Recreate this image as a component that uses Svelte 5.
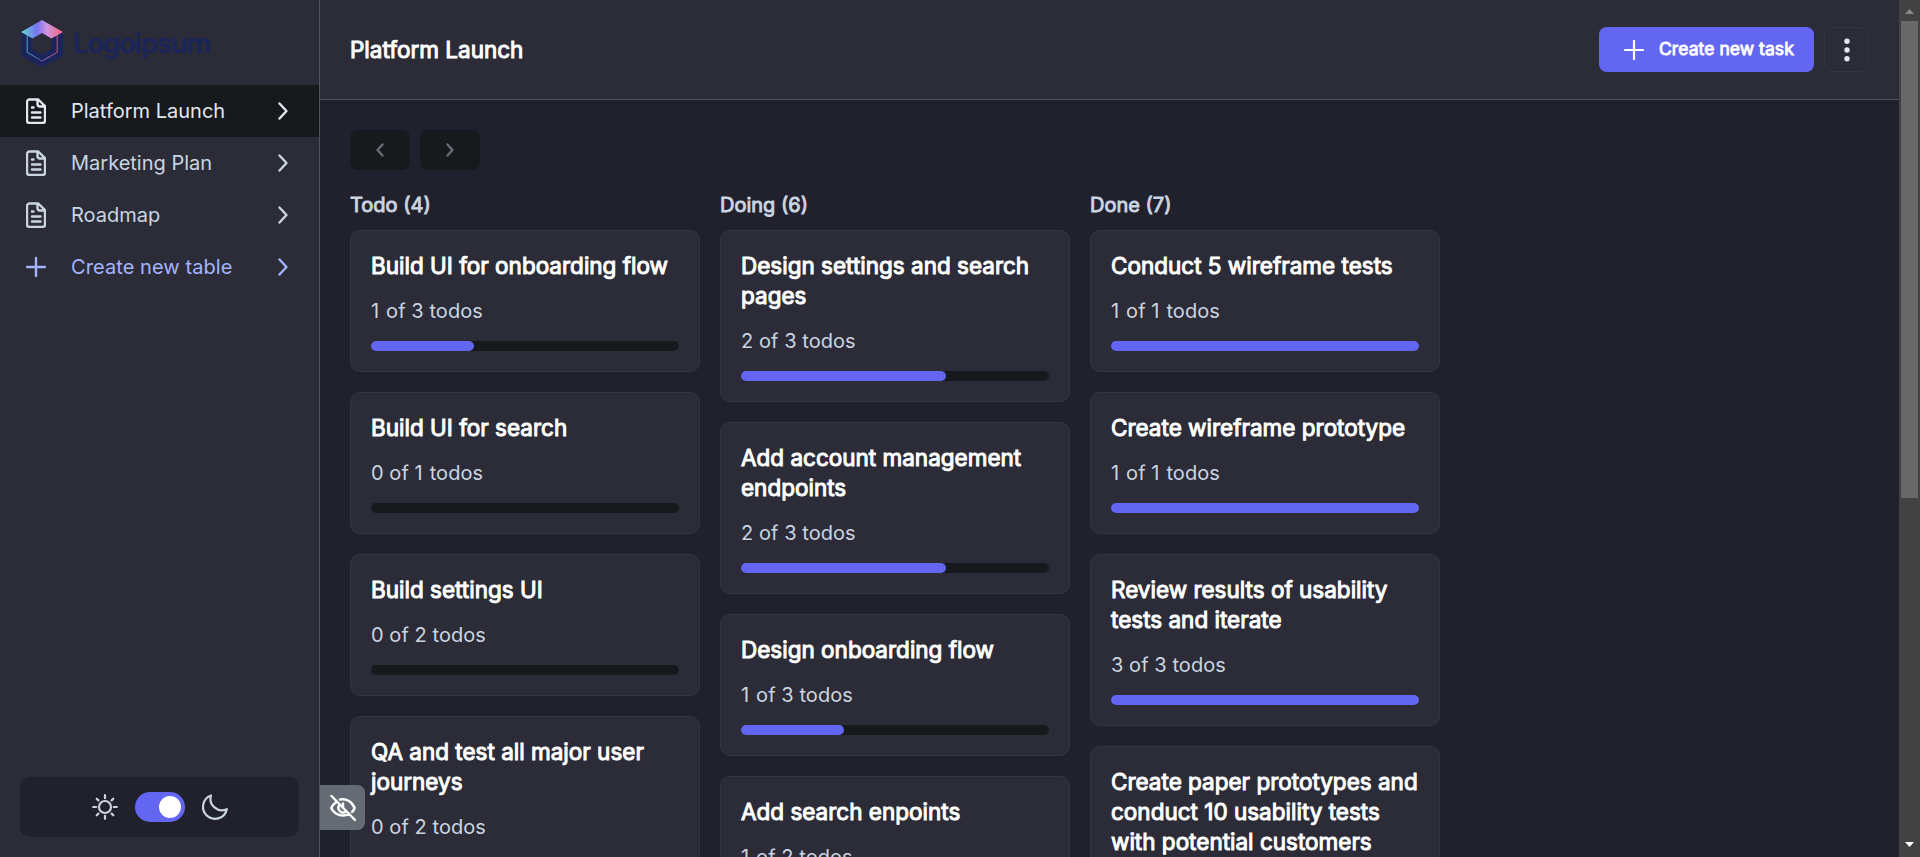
<script>
  const boards = [
    { name: 'Platform Launch', active: true },
    { name: 'Marketing Plan' },
    { name: 'Roadmap' },
  ];
  const columns = [
    { name: 'Todo', count: 4, tasks: [
      ['Build UI for onboarding flow', 1, 3],
      ['Build UI for search', 0, 1],
      ['Build settings UI', 0, 2],
      ['QA and test all major user journeys', 0, 2],
    ] },
    { name: 'Doing', count: 6, tasks: [
      ['Design settings and search pages', 2, 3],
      ['Add account management endpoints', 2, 3],
      ['Design onboarding flow', 1, 3],
      ['Add search enpoints', 1, 2],
    ] },
    { name: 'Done', count: 7, tasks: [
      ['Conduct 5 wireframe tests', 1, 1],
      ['Create wireframe prototype', 1, 1],
      ['Review results of usability tests and iterate', 3, 3],
      ['Create paper prototypes and conduct 10 usability tests with potential customers', 2, 2],
    ] },
  ];
</script>

{#snippet chevron()}
  <svg class="chevron" width="30" height="30" viewBox="0 0 30 30"><path d="M11.5 7.5 18.500 15l-7 7.500" /></svg>
{/snippet}

<div class="app">
  <aside>
    <div class="logo">
      <svg width="42" height="48" viewBox="0 0 42 48">
        <defs>
          <linearGradient id="roof" x1="0" x2="1" y1="0" y2="0">
            <stop offset="0" stop-color="#62dbd0" /><stop offset=".38" stop-color="#7774f0" /><stop offset=".62" stop-color="#cf94e0" /><stop offset="1" stop-color="#f8627c" />
          </linearGradient>
          <linearGradient id="edge" x1="0" x2="1" y1="0" y2="0">
            <stop offset="0" stop-color="#5cc5cf" /><stop offset=".4" stop-color="#6c6ce0" /><stop offset=".65" stop-color="#b77ccc" /><stop offset="1" stop-color="#e85f80" />
          </linearGradient>
        </defs>
        <path fill="#1b2559" fill-rule="evenodd" d="M0 12 21 0l21 12v24L21 47.500 0 36ZM21 13l9.500 5v11.500L21 34.500l-9.500-5V18Z" />
        <path fill="none" stroke="url(#edge)" stroke-width=".8" d="M6.200 15v17.300L21 41l15.200-8.700V15" />
        <path fill="url(#roof)" d="M0 12 21 0l21 12-11.500 6.400L21 13l-9.500 5.400Z" />
      </svg>
      <span>Logoipsum</span>
    </div>
    <nav>
      {#each boards as b}
        <div class="item" class:active={b.active}>
          <svg class="icon" width="20" height="26" viewBox="0 0 20 26">
            <path d="M3.500 1.500h8.800L19 8.200v14.300a2.500 2.500 0 0 1-2.500 2.500h-13A2.500 2.500 0 0 1 1 22.500V4a2.500 2.500 0 0 1 2.500-2.500ZM11.500 1.500V6a2.500 2.500 0 0 0 2.500 2.500H19M6 9.500H7.500M6 14.500h8.500M6 19.500h8.500" />
          </svg>
          <span>{b.name}</span>
          {@render chevron()}
        </div>
      {/each}
      <div class="item create">
        <svg class="icon" width="20" height="26" viewBox="0 0 20 26"><path d="M10 4v18M1 13h18" /></svg>
        <span>Create new table</span>
        {@render chevron()}
      </div>
    </nav>
    <div class="theme">
      <svg width="26" height="26" viewBox="0 0 26 26" class="line">
        <circle cx="13" cy="13" r="6" />
        <path d="M13 1.200v3M13 21.800v3M1.200 13h3M21.800 13h3M4.700 4.700l1.700 1.700M19.600 19.600l1.700 1.700M4.700 21.300l1.700-1.700M19.600 6.400l1.700-1.700" />
      </svg>
      <div class="switch"><i></i></div>
      <svg width="26" height="26" viewBox="0 0 26 26" class="line">
        <path d="M9 1.500A12 12 0 1 0 24.800 15.200 11.500 11.500 0 0 1 9 1.500Z" />
      </svg>
    </div>
  </aside>

  <main>
    <header>
      <h1>Platform Launch</h1>
      <button class="primary">
        <svg width="20" height="20" viewBox="0 0 20 20"><path d="M10 1v18M1 10h18" /></svg>
        <span>Create new task</span>
      </button>
      <button class="more" aria-label="More">
        <svg width="6" height="24" viewBox="0 0 6 24"><circle cx="3" cy="3.200" r="2.700" /><circle cx="3" cy="12" r="2.700" /><circle cx="3" cy="20.800" r="2.700" /></svg>
      </button>
    </header>
    <section>
      <div class="pager">
        <div><svg width="10" height="16" viewBox="0 0 10 16"><path d="M7.500 2.500 2.500 8l5 5.500" /></svg></div>
        <div><svg width="10" height="16" viewBox="0 0 10 16"><path d="M2.500 2.500 7.500 8l-5 5.500" /></svg></div>
      </div>
      <div class="columns">
        {#each columns as c}
          <div class="column">
            <h2>{c.name} ({c.count})</h2>
            {#each c.tasks as [title, done, total]}
              <article>
                <h3>{title}</h3>
                <p><span class:one={done === 1}>{done}</span> of <span class:one={total === 1}>{total}</span> todos</p>
                <div class="bar"><div style:width="{(done / total) * 100}%"></div></div>
              </article>
            {/each}
          </div>
        {/each}
      </div>
    </section>
    <div class="hide">
      <svg width="26" height="26" viewBox="0 0 26 26">
        <path d="M6 7.200C3.500 9 2 11 1.300 13c3 6.500 11.500 9.800 18 5.800M10 4.500c6-1.500 12 2 14.700 8.500-.6 1.500-1.400 2.700-2.500 3.800M9.200 10.200a4.800 4.800 0 0 0 6.600 6.600M13 13v-4.500M1.500 1 25 25" />
      </svg>
    </div>
  </main>

  <div class="scrollbar">
    <svg width="9" height="5" viewBox="0 0 9 5"><path fill="#8a8a8a" d="M0 5 4.500 0 9 5Z" /></svg>
    <div class="thumb"></div>
    <svg class="down" width="9" height="5" viewBox="0 0 9 5"><path fill="#fff" d="M0 0h9L4.500 5Z" /></svg>
  </div>
</div>

<style>
  :global(body) { overflow: hidden; background: #21212d; }
  .app { display: flex; height: 857px; overflow: hidden; font: 20px/30px Inter, sans-serif; color: #cbd5e1; background: #21212d; }
  h1, h2, h3, p { margin: 0; font-weight: 400; }
  svg { flex: none; display: block; }
  aside { box-sizing: border-box; width: 320px; flex: none; display: flex; flex-direction: column; background: #2b2c37; border-right: 1px solid #4f5361; }
  .logo { box-sizing: border-box; height: 85px; padding: 20px 21px 0; display: flex; gap: 10px; color: #1b2559; }
  .logo span { font: 600 27.500px/47px Inter, sans-serif; letter-spacing: -1.1px; -webkit-text-stroke: .3px; }
  .item { height: 52px; padding: 0 21px 0 26px; display: flex; align-items: center; }
  .item span { flex: 1; margin-left: 25px; }
  .item.active { background: #171a1c; color: #e2e8f0; }
  .item.create { color: #a5b4fc; }
  .item.create span { letter-spacing: .08px; }
  .icon, .chevron, .line { fill: none; stroke: currentColor; stroke-width: 2.200; stroke-linecap: round; stroke-linejoin: round; }
  .icon, .chevron { stroke-width: 2.400; }
  .theme { margin: auto 20px 20px; height: 60px; border-radius: 10px; background: #21212d; display: flex; align-items: center; justify-content: center; gap: 17px; }
  .switch { box-sizing: border-box; width: 50px; height: 30px; border-radius: 15px; background: #6366f1; padding: 4px; display: flex; justify-content: flex-end; }
  .switch i { width: 22px; height: 22px; border-radius: 50%; background: #fff; }
  main { flex: 1; min-width: 0; position: relative; }
  header { box-sizing: border-box; height: 100px; padding: 0 30px; display: flex; align-items: center; background: #2b2c37; border-bottom: 1px solid #4f5361; }
  h1 { flex: 1; font-size: 22.500px; color: #fff; -webkit-text-stroke: 1px; }
  button { box-sizing: border-box; height: 45px; border: 0; border-radius: 7.500px; font: inherit; padding: 0; display: flex; align-items: center; }
  .primary { width: 215px; background: #6366f1; color: #fff; padding-left: 25px; gap: 15px; font-size: 17.500px; letter-spacing: .06px; -webkit-text-stroke: .9px; }
  .primary span { padding-bottom: 2px; }
  .primary svg { fill: none; stroke: #fff; stroke-width: 2.200; stroke-linecap: round; }
  .more { width: 45px; margin-left: 10px; justify-content: center; background: none; border: 1px solid #33363f; }
  .more svg { fill: #e2e8f0; }
  section { padding: 30px; }
  .pager { display: flex; gap: 10px; }
  .pager div { width: 60px; height: 40px; border-radius: 7.500px; background: #171a1c; display: flex; align-items: center; justify-content: center; }
  .pager svg { fill: none; stroke: #646b75; stroke-width: 2.500; stroke-linecap: round; stroke-linejoin: round; }
  .columns { display: flex; gap: 20px; margin-top: 20px; }
  .column { width: 350px; display: flex; flex-direction: column; gap: 20px; }
  h2 { font-size: 20px; line-height: 30px; margin-bottom: -10px; -webkit-text-stroke: .9px; }
  article { box-sizing: border-box; border: 1px solid #343641; border-radius: 10px; background: #2b2c37; padding: 20px; }
  h3 { font-size: 22.500px; line-height: 30px; color: #fff; -webkit-text-stroke: 1px; }
  p { margin: 15px 0; letter-spacing: .06px; }
  .one { letter-spacing: 1.300px; }
  .bar { height: 10px; border-radius: 5px; background: #171a1c; }
  .bar div { height: 10px; border-radius: 5px; background: #6366f1; }
  .hide { position: absolute; left: 0; top: 785px; width: 45px; height: 45px; border-radius: 0 7.500px 7.500px 0; background: #646b75; display: flex; align-items: center; justify-content: center; }
  .hide svg { fill: none; stroke: #fff; stroke-width: 2.500; stroke-linecap: round; stroke-linejoin: round; }
  .scrollbar { box-sizing: border-box; width: 21px; flex: none; background: #424242; padding: 9px 2px 10px; display: flex; flex-direction: column; align-items: center; }
  .thumb { width: 17px; height: 477px; margin-top: 7px; background: #686868; }
  .down { margin-top: auto; }
</style>
